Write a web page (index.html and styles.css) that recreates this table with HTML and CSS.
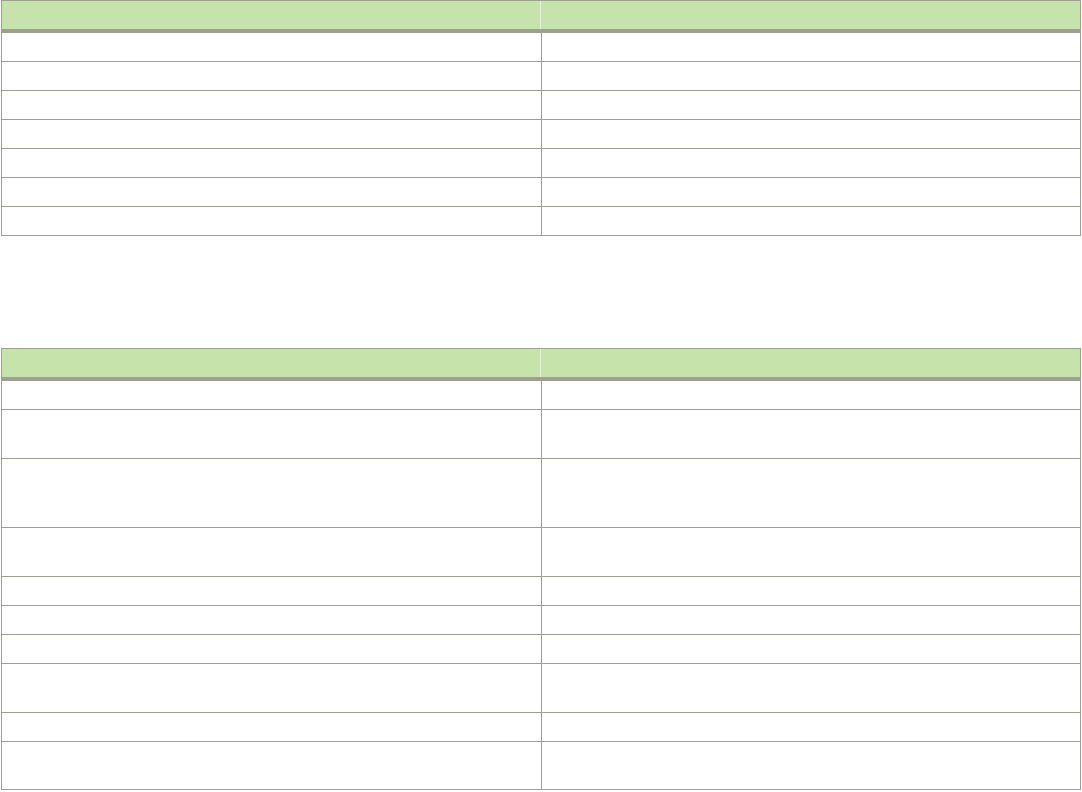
FILE: index.html
```html
<!DOCTYPE html>
<html lang="en">
<head>
<meta charset="utf-8">
<title>Tables</title>
<link rel="stylesheet" href="styles.css">
</head>
<body>
<div class="page">
  <div class="table">
    <div class="row head"><div class="cell"></div><div class="cell"></div></div>
    <div class="row h1"><div class="cell"></div><div class="cell"></div></div>
    <div class="row h1"><div class="cell"></div><div class="cell"></div></div>
    <div class="row h1"><div class="cell"></div><div class="cell"></div></div>
    <div class="row h1"><div class="cell"></div><div class="cell"></div></div>
    <div class="row h1"><div class="cell"></div><div class="cell"></div></div>
    <div class="row h1"><div class="cell"></div><div class="cell"></div></div>
    <div class="row h1"><div class="cell"></div><div class="cell"></div></div>
  </div>

  <div class="table second">
    <div class="row head"><div class="cell"></div><div class="cell"></div></div>
    <div class="row h1"><div class="cell"></div><div class="cell"></div></div>
    <div class="row h2"><div class="cell"></div><div class="cell"></div></div>
    <div class="row h3"><div class="cell"></div><div class="cell"></div></div>
    <div class="row h2"><div class="cell"></div><div class="cell"></div></div>
    <div class="row h1"><div class="cell"></div><div class="cell"></div></div>
    <div class="row h1"><div class="cell"></div><div class="cell"></div></div>
    <div class="row h1"><div class="cell"></div><div class="cell"></div></div>
    <div class="row h2"><div class="cell"></div><div class="cell"></div></div>
    <div class="row h1"><div class="cell"></div><div class="cell"></div></div>
    <div class="row h2b"><div class="cell"></div><div class="cell"></div></div>
  </div>
</div>
</body>
</html>
```

FILE: styles.css
```css
html, body {
  margin: 0;
  padding: 0;
  background: #ffffff;
  font-family: "Liberation Sans", Arial, sans-serif;
  font-size: 14px;
}

.page {
  padding-left: 1px;
  width: 1080px;
}

.table {
  width: 1080px;
  box-sizing: border-box;
  border-top: 1px solid #9f9f91;
  border-left: 1px solid #9f9f91;
  border-right: 1px solid #9f9f91;
}

.second {
  margin-top: 112px;
}

.row {
  display: grid;
  grid-template-columns: 540px 1fr;
  border-bottom: 1px solid #9f9f91;
  height: 28px;
}

.row .cell:first-child {
  border-right: 1px solid #9f9f91;
}

.row.head {
  background: #c6e3ab;
  border-bottom: 4px solid #9f9f91;
  grid-template-columns: 539px 1fr;
}

.row.head .cell:first-child {
  border-right: 1px solid #e4f0d8;
}

.row.h1 { height: 28px; }
.row.h2 { height: 48px; }
.row.h2b { height: 47px; }
.row.h3 { height: 68px; }
```
